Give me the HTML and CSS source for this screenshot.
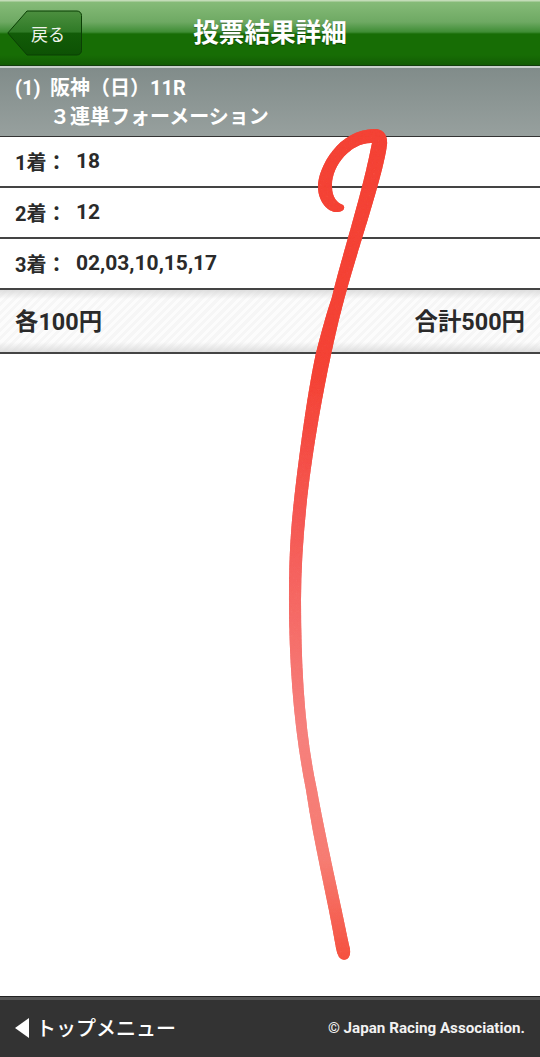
FILE: index.html
```html
<!DOCTYPE html>
<html lang="ja">
<head>
<meta charset="utf-8">
<title>投票結果詳細</title>
<link rel="stylesheet" href="styles.css">
</head>
<body>
<div class="page">
  <header class="topbar">
    <a class="back"><svg class="back-shape" width="75" height="46" viewBox="0 0 75 46"><defs><linearGradient id="bk" x1="0" y1="0" x2="0" y2="1"><stop offset="0" stop-color="#4c8f3f"/><stop offset=".48" stop-color="#2f7a26"/><stop offset=".5" stop-color="#125c08"/><stop offset="1" stop-color="#0d5204"/></linearGradient></defs><path d="M.8 23 20 1h50a4.500 4.500 0 0 1 4.500 4.500v35a4.500 4.500 0 0 1-4.500 4.500H20z" fill="url(#bk)" stroke="#0b3f05"/></svg><span class="back-label">戻る</span></a>
    <h1 class="title">投票結果詳細</h1>
  </header>
  <section class="race">
    <div class="race-line"><span class="race-no">(1)</span>阪神（日）11R</div>
    <div class="race-type">３連単フォーメーション</div>
  </section>
  <div class="row"><span class="row-label">1着：</span><span>18</span></div>
  <div class="row"><span class="row-label">2着：</span><span>12</span></div>
  <div class="row"><span class="row-label">3着：</span><span>02,03,10,15,17</span></div>
  <div class="summary"><span>各100円</span><span>合計500円</span></div>
  <main class="blank"></main>
  <footer class="footer">
    <a class="top-link"><svg class="tri" width="14" height="20" viewBox="0 0 14 20"><path d="M14 0v20L0 10z" fill="#fff"/></svg>トップメニュー</a>
    <span class="copy">© Japan Racing Association.</span>
  </footer>
  <svg class="scribble" width="540" height="1057" viewBox="0 0 540 1057">
    <defs>
      <linearGradient id="ink" gradientUnits="userSpaceOnUse" x1="0" y1="130" x2="0" y2="960">
        <stop offset="0" stop-color="#f44336"/>
        <stop offset=".3" stop-color="#f44336"/>
        <stop offset=".48" stop-color="#f55a55"/>
        <stop offset=".72" stop-color="#f6807c"/>
        <stop offset=".88" stop-color="#f67c72"/>
        <stop offset="1" stop-color="#f5503f"/>
      </linearGradient>
      <filter id="chalk" x="-10%" y="-2%" width="120%" height="104%">
        <feGaussianBlur in="SourceGraphic" stdDeviation="0.7" result="soft"/>
        <feTurbulence type="fractalNoise" baseFrequency="0.45" numOctaves="2" seed="4" result="noise"/>
        <feColorMatrix in="noise" type="matrix" values="0 0 0 0 0 0 0 0 0 0 0 0 0 0 0 0 0 0 .5 .72" result="grain"/>
        <feComposite in="soft" in2="grain" operator="in" result="grained"/>
        <feMerge><feMergeNode in="grained"/><feMergeNode in="grained"/></feMerge>
      </filter>
    </defs>
    <path filter="url(#chalk)" fill="url(#ink)" d="M387 145C382 180 358 248 344 300C330 352 313 440 306 510C303 540 301 570 301 600C301 670 305 735 317 790C326 840 340 900 349 945Q352 955 347 959Q342 961 339 957Q337 954 336 948C328 900 314 845 306 790C295 735 289 670 289 600C289 565 290 540 293 510C300 445 309 385 316 353C322 330 326 315 332 297C342 255 362 195 372 143C352 142 331 165 332 187C332 197 337 203 343 205C346 208 343 212 338 212C327 213 318 200 318 187C318 168 338 129 375 129C383 129 388 135 387 145Z"/>
  </svg>
</div>
</body>
</html>
```
FILE: styles.css
```css
* { box-sizing: border-box; }
html, body { margin: 0; padding: 0; }
body { font-family: Roboto, "Noto Sans CJK JP", sans-serif; color: #2a2a2a; background: #fff; }
.page { position: relative; width: 540px; height: 1057px; display: flex; flex-direction: column; overflow: hidden; }
.topbar {
  height: 68px; flex: none; display: flex; align-items: center; justify-content: center; position: relative;
  background: linear-gradient(#c4dcb8 0, #c4dcb8 1px, #86bb78 2px, #6ea963 22px, #3f8d35 32px, #176d05 34px, #176d05 55px, #135c04 65px);
  border-bottom: 2px solid #c9d0cc; box-shadow: inset 0 -1px 0 #123d0c;
}
.back { position: absolute; left: 7px; top: 10px; width: 75px; height: 46px; display: flex; align-items: center; justify-content: center; }
.back-shape { position: absolute; left: 0; top: 0; }
.back-label { position: relative; color: #f0f4ec; font-size: 17px; font-weight: 400; margin-left: 7px; }
.title { margin: 2px 0 0; color: #fff; font-size: 25.600px; font-weight: 700; line-height: 1; text-shadow: 0 1px 1px rgba(0,0,0,.35); }
.race {
  height: 69px; flex: none; padding: 6px 15px 0; color: #fff; font-weight: 700; line-height: 28px;
  background: linear-gradient(#818c8a, #97a09e); border-bottom: 1px solid #333;
}
.race-line { height: 28px; font-size: 20px; }
.race-no { display: inline-block; width: 35px; }
.race-type { padding-left: 35px; padding-top: 1px; font-size: 20px; }
.row { height: 51px; flex: none; padding-left: 15px; padding-bottom: 1px; display: flex; align-items: center; font-size: 21px; font-weight: 700; background: #fff; border-bottom: 2px solid #444; }
.row-label { width: 61px; font-size: 20px; }
.summary {
  height: 64px; flex: none; padding: 0 15px 3px; display: flex; align-items: center; justify-content: space-between;
  font-size: 23.400px; font-weight: 700;
  border-bottom: 2px solid #444;
  background:
    linear-gradient(rgba(215,215,215,.8), rgba(255,255,255,0) 9px, rgba(255,255,255,0) 52px, rgba(215,215,215,.8)),
    repeating-linear-gradient(135deg, #fcfcfc 0 3px, #f6f6f6 3px 6px);
}
.blank { flex: 1; background: #fff; }
.footer {
  height: 60px; flex: none; padding: 0 15px 2px; display: flex; align-items: center; justify-content: space-between;
  background: #333; color: #fff; border-top: 3px solid #555; box-shadow: 0 -1px 0 #222;
}
.top-link { display: flex; align-items: center; gap: 7px; font-size: 20px; font-weight: 500; }
.tri { flex: none; }
.copy { font-size: 15.200px; font-weight: 700; color: #f2f2f2; }
.scribble { position: absolute; left: 0; top: 0; pointer-events: none; }
```
